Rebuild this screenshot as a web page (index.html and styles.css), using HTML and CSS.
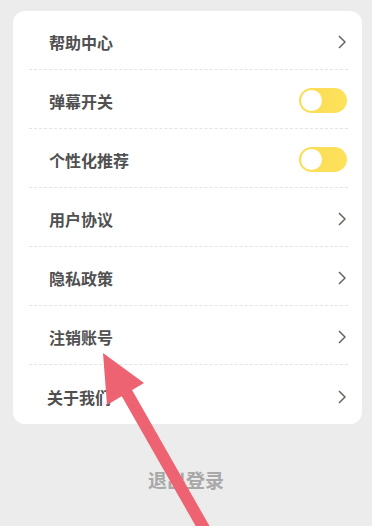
FILE: index.html
```html
<!DOCTYPE html>
<html lang="zh-CN">
<head>
    <meta charset="UTF-8">
    <meta name="viewport" content="width=device-width, initial-scale=1.0">
    <title>设置</title>
    <link rel="stylesheet" href="styles.css">
</head>
<body>
    <div class="page">
        <!-- settings list -->
        <div class="card">
            <div class="row">
                <span class="label">帮助中心</span>
                <svg class="chevron" viewBox="0 0 8 14"><path d="M1 1 L7 7 L1 13"/></svg>
            </div>
            <div class="row">
                <span class="label">弹幕开关</span>
                <span class="switch"><span class="knob"></span></span>
            </div>
            <div class="row">
                <span class="label">个性化推荐</span>
                <span class="switch"><span class="knob"></span></span>
            </div>
            <div class="row">
                <span class="label">用户协议</span>
                <svg class="chevron" viewBox="0 0 8 14"><path d="M1 1 L7 7 L1 13"/></svg>
            </div>
            <div class="row">
                <span class="label">隐私政策</span>
                <svg class="chevron" viewBox="0 0 8 14"><path d="M1 1 L7 7 L1 13"/></svg>
            </div>
            <div class="row">
                <span class="label">注销账号</span>
                <svg class="chevron" viewBox="0 0 8 14"><path d="M1 1 L7 7 L1 13"/></svg>
            </div>
            <div class="row">
                <span class="label about">关于我们</span>
                <svg class="chevron" viewBox="0 0 8 14"><path d="M1 1 L7 7 L1 13"/></svg>
            </div>
        </div>

        <div class="logout">退出登录</div>

        <!-- annotation arrow drawn over the screenshot -->
        <svg class="arrow" viewBox="0 0 372 526">
            <line x1="124" y1="388" x2="206" y2="532" />
            <polygon points="103,353 144,383 107,405" />
        </svg>
    </div>
</body>
</html>
```

FILE: styles.css
```css
html, body {
    margin: 0;
    padding: 0;
}
body {
    background: #ececec;
    font-family: "Noto Sans CJK SC", "Noto Sans", sans-serif;
    color: #505050;
}
.page {
    position: relative;
    height: 526px;
    overflow: hidden;
    padding-top: 11px;
    box-sizing: border-box;
}
.card {
    margin: 0 10px 0 13px;
    background: #fff;
    border-radius: 12px;
    padding: 0 14px 0 16px;
}
.row {
    display: flex;
    align-items: center;
    justify-content: space-between;
    height: 59px;
    box-sizing: border-box;
    padding: 4px 1px 0 20px;
    border-bottom: 1px dashed #e4e4e4;
}
.row:last-child {
    border-bottom: none;
}
.label {
    font-size: 16px;
    font-weight: 600;
}
.label.about {
    margin-left: -2px;
}
.chevron {
    width: 8px;
    height: 14px;
    margin-right: 1px;
    fill: none;
    stroke: #6a625e;
    stroke-width: 1.5;
}
.switch {
    display: flex;
    align-items: center;
    width: 48px;
    height: 25px;
    border-radius: 13px;
    background: linear-gradient(90deg, #fbdc57, #fde25a);
    box-sizing: border-box;
    padding-left: 2px;
    margin-top: -2px;
}
.knob {
    width: 21px;
    height: 21px;
    border-radius: 50%;
    background: #fff;
}
.logout {
    margin-top: 42px;
    text-align: center;
    font-size: 19px;
    font-weight: 700;
    color: #a8a8a8;
    line-height: 28px;
}
.arrow {
    position: absolute;
    left: 0;
    top: 0;
    width: 372px;
    height: 526px;
}
.arrow line {
    stroke: #ee6371;
    stroke-width: 12;
}
.arrow polygon {
    fill: #ee6371;
}
```
